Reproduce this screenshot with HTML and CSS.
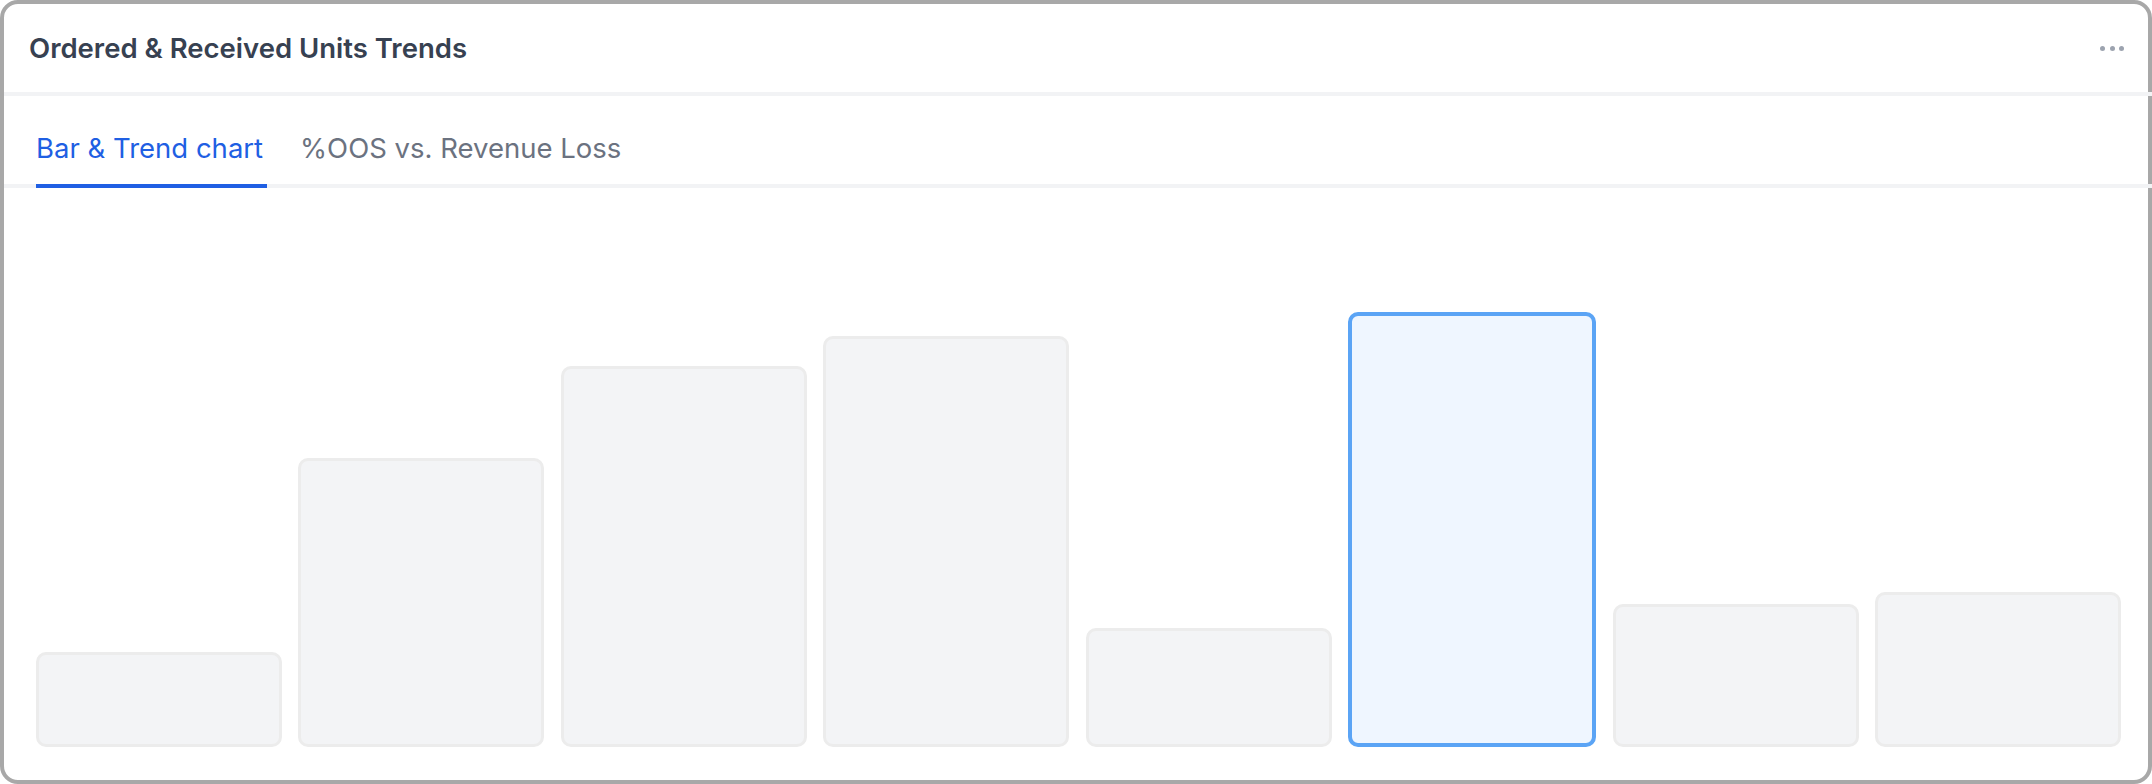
FILE: index.html
```html
<!DOCTYPE html>
<html lang="en">
<head>
<meta charset="utf-8">
<title>Ordered &amp; Received Units Trends</title>
<link rel="stylesheet" href="styles.css">
</head>
<body>
<div class="card">
  <div class="card-header">
    <h2 class="card-title">Ordered &amp; Received Units Trends</h2>
    <button class="more" aria-label="More options">
      <span class="dot"></span><span class="dot"></span><span class="dot"></span>
    </button>
  </div>
  <div class="tabs">
    <div class="tab active">Bar &amp; Trend chart</div>
    <div class="tab">%OOS vs. Revenue Loss</div>
  </div>
  <div class="chart">
    <div class="bar" style="height:95px"></div>
    <div class="bar" style="height:289px"></div>
    <div class="bar" style="height:381px"></div>
    <div class="bar" style="height:411px"></div>
    <div class="bar" style="height:119px"></div>
    <div class="bar selected" style="height:435px"></div>
    <div class="bar" style="height:143px"></div>
    <div class="bar" style="height:155px"></div>
  </div>
</div>
</body>
</html>
```

FILE: styles.css
```css
* { box-sizing: border-box; }
html, body { margin: 0; padding: 0; background: #ffffff; }
body { font-family: Inter, "Noto Sans", "Liberation Sans", sans-serif; }

.card {
  width: 2152px;
  height: 784px;
  border: 4px solid #a8a8a8;
  border-radius: 18px;
  background: #ffffff;
  display: flex;
  flex-direction: column;
}

.card-header {
  display: flex;
  align-items: center;
  justify-content: space-between;
  height: 92px;
  padding: 0 28px 0 25px;
  margin-right: -4px;
  border-bottom: 4px solid #f2f3f5;
}

.card-title {
  margin: 0;
  font-size: 27.5px;
  line-height: 32px;
  font-weight: 600;
  color: #374151;
}

.more {
  display: flex;
  gap: 4.5px;
  padding: 0;
  border: 0;
  background: transparent;
}
.dot {
  width: 5px;
  height: 5px;
  border-radius: 50%;
  background: #9ca3af;
}

.tabs {
  display: flex;
  gap: 33px;
  padding: 0 0 0 32px;
  margin-right: -4px;
  border-bottom: 4px solid #f2f3f5;
}
.tab {
  padding: 36px 4px 20px 0;
  margin-bottom: -4px;
  border-bottom: 4px solid transparent;
  font-size: 27.5px;
  line-height: 32px;
  color: #6b7280;
  white-space: nowrap;
}
.tab.active {
  color: #1f5fe3;
  border-bottom-color: #1f5fe3;
}

.chart {
  flex: 1;
  display: flex;
  align-items: flex-end;
  gap: 16.7px;
  padding: 0 27px 33px 32px;
}
.bar {
  flex: 1;
  background: #f3f4f6;
  border: 3px solid #ececec;
  border-radius: 10px;
}
.bar.selected {
  background: #eff6ff;
  border: 4px solid #5ba4f5;
}
```
